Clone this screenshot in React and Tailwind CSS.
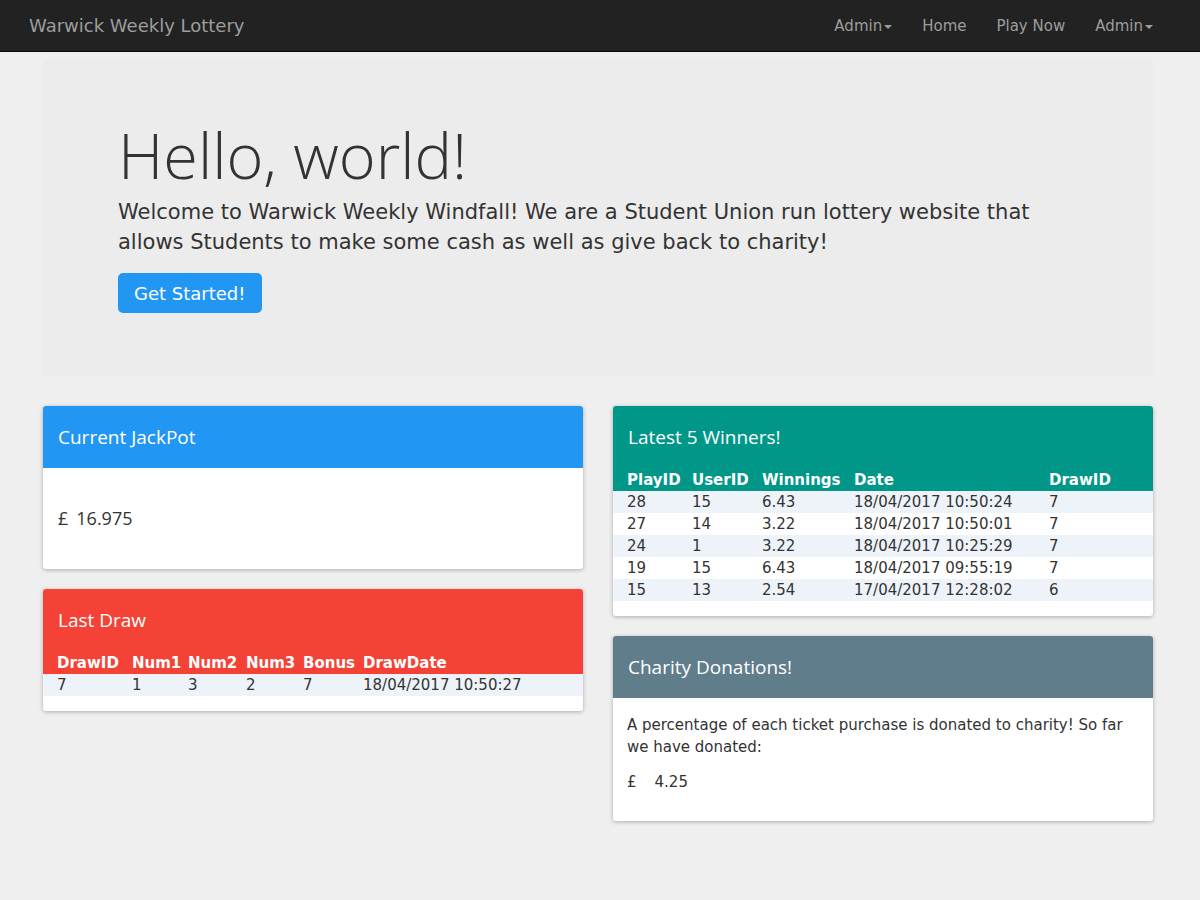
const sans = "font-['DejaVu_Sans','Verdana',sans-serif]"
const head = "font-['Open_Sans','Noto_Sans',sans-serif]"

const LAST_DRAW = [{ id: 7, n1: 1, n2: 3, n3: 2, bonus: 7, date: '18/04/2017 10:50:27' }]

const WINNERS = [
  { play: 28, user: 15, win: '6.43', date: '18/04/2017 10:50:24', draw: 7 },
  { play: 27, user: 14, win: '3.22', date: '18/04/2017 10:50:01', draw: 7 },
  { play: 24, user: 1, win: '3.22', date: '18/04/2017 10:25:29', draw: 7 },
  { play: 19, user: 15, win: '6.43', date: '18/04/2017 09:55:19', draw: 7 },
  { play: 15, user: 13, win: '2.54', date: '17/04/2017 12:28:02', draw: 6 },
]

function Caret() {
  return <span className="inline-block w-0 h-0 ml-[2px] align-middle border-t-[4px] border-t-[#9d9d9d] border-x-[4px] border-x-transparent" />
}

function NavBar() {
  return (
    <nav className={`h-[52px] bg-[#222222] border-b border-[#080808] flex items-center justify-between pl-[29px] pr-[47px] ${sans}`}>
      <span className="text-[18px] text-[#9d9d9d]">Warwick Weekly Lottery</span>
      <ul className="flex items-center gap-[30px] text-[15px] text-[#9d9d9d] pt-[2px]">
        <li>Admin<Caret /></li>
        <li>Home</li>
        <li>Play Now</li>
        <li>Admin<Caret /></li>
      </ul>
    </nav>
  )
}

function CardTitle({ children }) {
  return (
    <div className="h-[62px] flex items-center px-[15px]">
      <h3 className={`text-[19px] text-white ${head}`}>{children}</h3>
    </div>
  )
}

function Card({ children, className = '' }) {
  return (
    <div className={`rounded-[3px] overflow-hidden bg-white shadow-[0_1px_4px_rgba(0,0,0,0.28)] ${className}`}>
      {children}
    </div>
  )
}

function DataTable({ color, widths, columns, rows }) {
  return (
    <table className={`w-full table-fixed text-[15px] leading-[20px] ${sans}`}>
      <colgroup>
        {widths.map((w, i) => <col key={i} style={{ width: w }} />)}
      </colgroup>
      <thead className={`${color} text-white`}>
        <tr className="h-[23px] text-left font-bold">
          {columns.map((c, i) => (
            <th key={c} className={i === 0 ? 'pl-[14px]' : ''}>{c}</th>
          ))}
        </tr>
      </thead>
      <tbody>
        {rows.map((r, i) => (
          <tr key={i} className={`h-[22px] ${i % 2 === 0 ? 'bg-[#eef3fa]' : 'bg-white'}`}>
            {r.map((v, j) => (
              <td key={j} className={`whitespace-nowrap ${j === 0 ? 'pl-[14px]' : ''}`}>{v}</td>
            ))}
          </tr>
        ))}
      </tbody>
    </table>
  )
}

export default function App() {
  return (
    <div className="min-h-[900px] bg-[#efefef] text-[#333333]">
      <NavBar />
      <div className="ml-[43px] w-[1110px] pt-[7px]">
        {/* Jumbotron */}
        <div className="bg-[#ececec] h-[317px] pt-[61px] px-[75px]">
          <h1 className={`text-[63px] leading-[1.1] font-light ${head}`}>Hello, world!</h1>
          <p className={`mt-[8px] text-[21px] leading-[30px] w-[960px] ${sans}`}>
            Welcome to Warwick Weekly Windfall! We are a Student Union run lottery website that allows Students to make some cash as well as give back to charity!
          </p>
          <button className={`mt-[16px] h-[40px] px-[16px] rounded-[5px] bg-[#2196f3] text-white text-[18px] ${sans}`}>
            Get Started!
          </button>
        </div>

        <div className="mt-[30px] grid grid-cols-2 gap-[30px] items-start">
          {/* Left column */}
          <div className="flex flex-col gap-[20px]">
            <Card>
              <div className="bg-[#2196f3]">
                <CardTitle>Current JackPot</CardTitle>
              </div>
              <div className={`h-[101px] flex items-center px-[15px] text-[18px] ${head}`}>
                <span>£</span><span className="ml-[8px]">16.975</span>
              </div>
            </Card>

            <Card className="pb-[15px]">
              <div className="bg-[#f44336]">
                <CardTitle>Last Draw</CardTitle>
              </div>
              <DataTable
                color="bg-[#f44336]"
                widths={['89px', '56px', '58px', '57px', '60px', 'auto']}
                columns={['DrawID', 'Num1', 'Num2', 'Num3', 'Bonus', 'DrawDate']}
                rows={LAST_DRAW.map(r => [r.id, r.n1, r.n2, r.n3, r.bonus, r.date])}
              />
            </Card>
          </div>

          {/* Right column */}
          <div className="flex flex-col gap-[20px]">
            <Card className="pb-[15px]">
              <div className="bg-[#009688]">
                <CardTitle>Latest 5 Winners!</CardTitle>
              </div>
              <DataTable
                color="bg-[#009688]"
                widths={['79px', '70px', '92px', '195px', 'auto']}
                columns={['PlayID', 'UserID', 'Winnings', 'Date', 'DrawID']}
                rows={WINNERS.map(r => [r.play, r.user, r.win, r.date, r.draw])}
              />
            </Card>

            <Card>
              <div className="bg-[#607d8b]">
                <CardTitle>Charity Donations!</CardTitle>
              </div>
              <div className={`pt-[16px] px-[14px] pb-[15px] text-[15px] leading-[22px] ${sans}`}>
                <p className="mb-[13px]">A percentage of each ticket purchase is donated to charity! So far we have donated:</p>
                <p className="mb-[13px]"><span>£</span><span className="ml-[18px]">4.25</span></p>
              </div>
            </Card>
          </div>
        </div>
      </div>
    </div>
  )
}
